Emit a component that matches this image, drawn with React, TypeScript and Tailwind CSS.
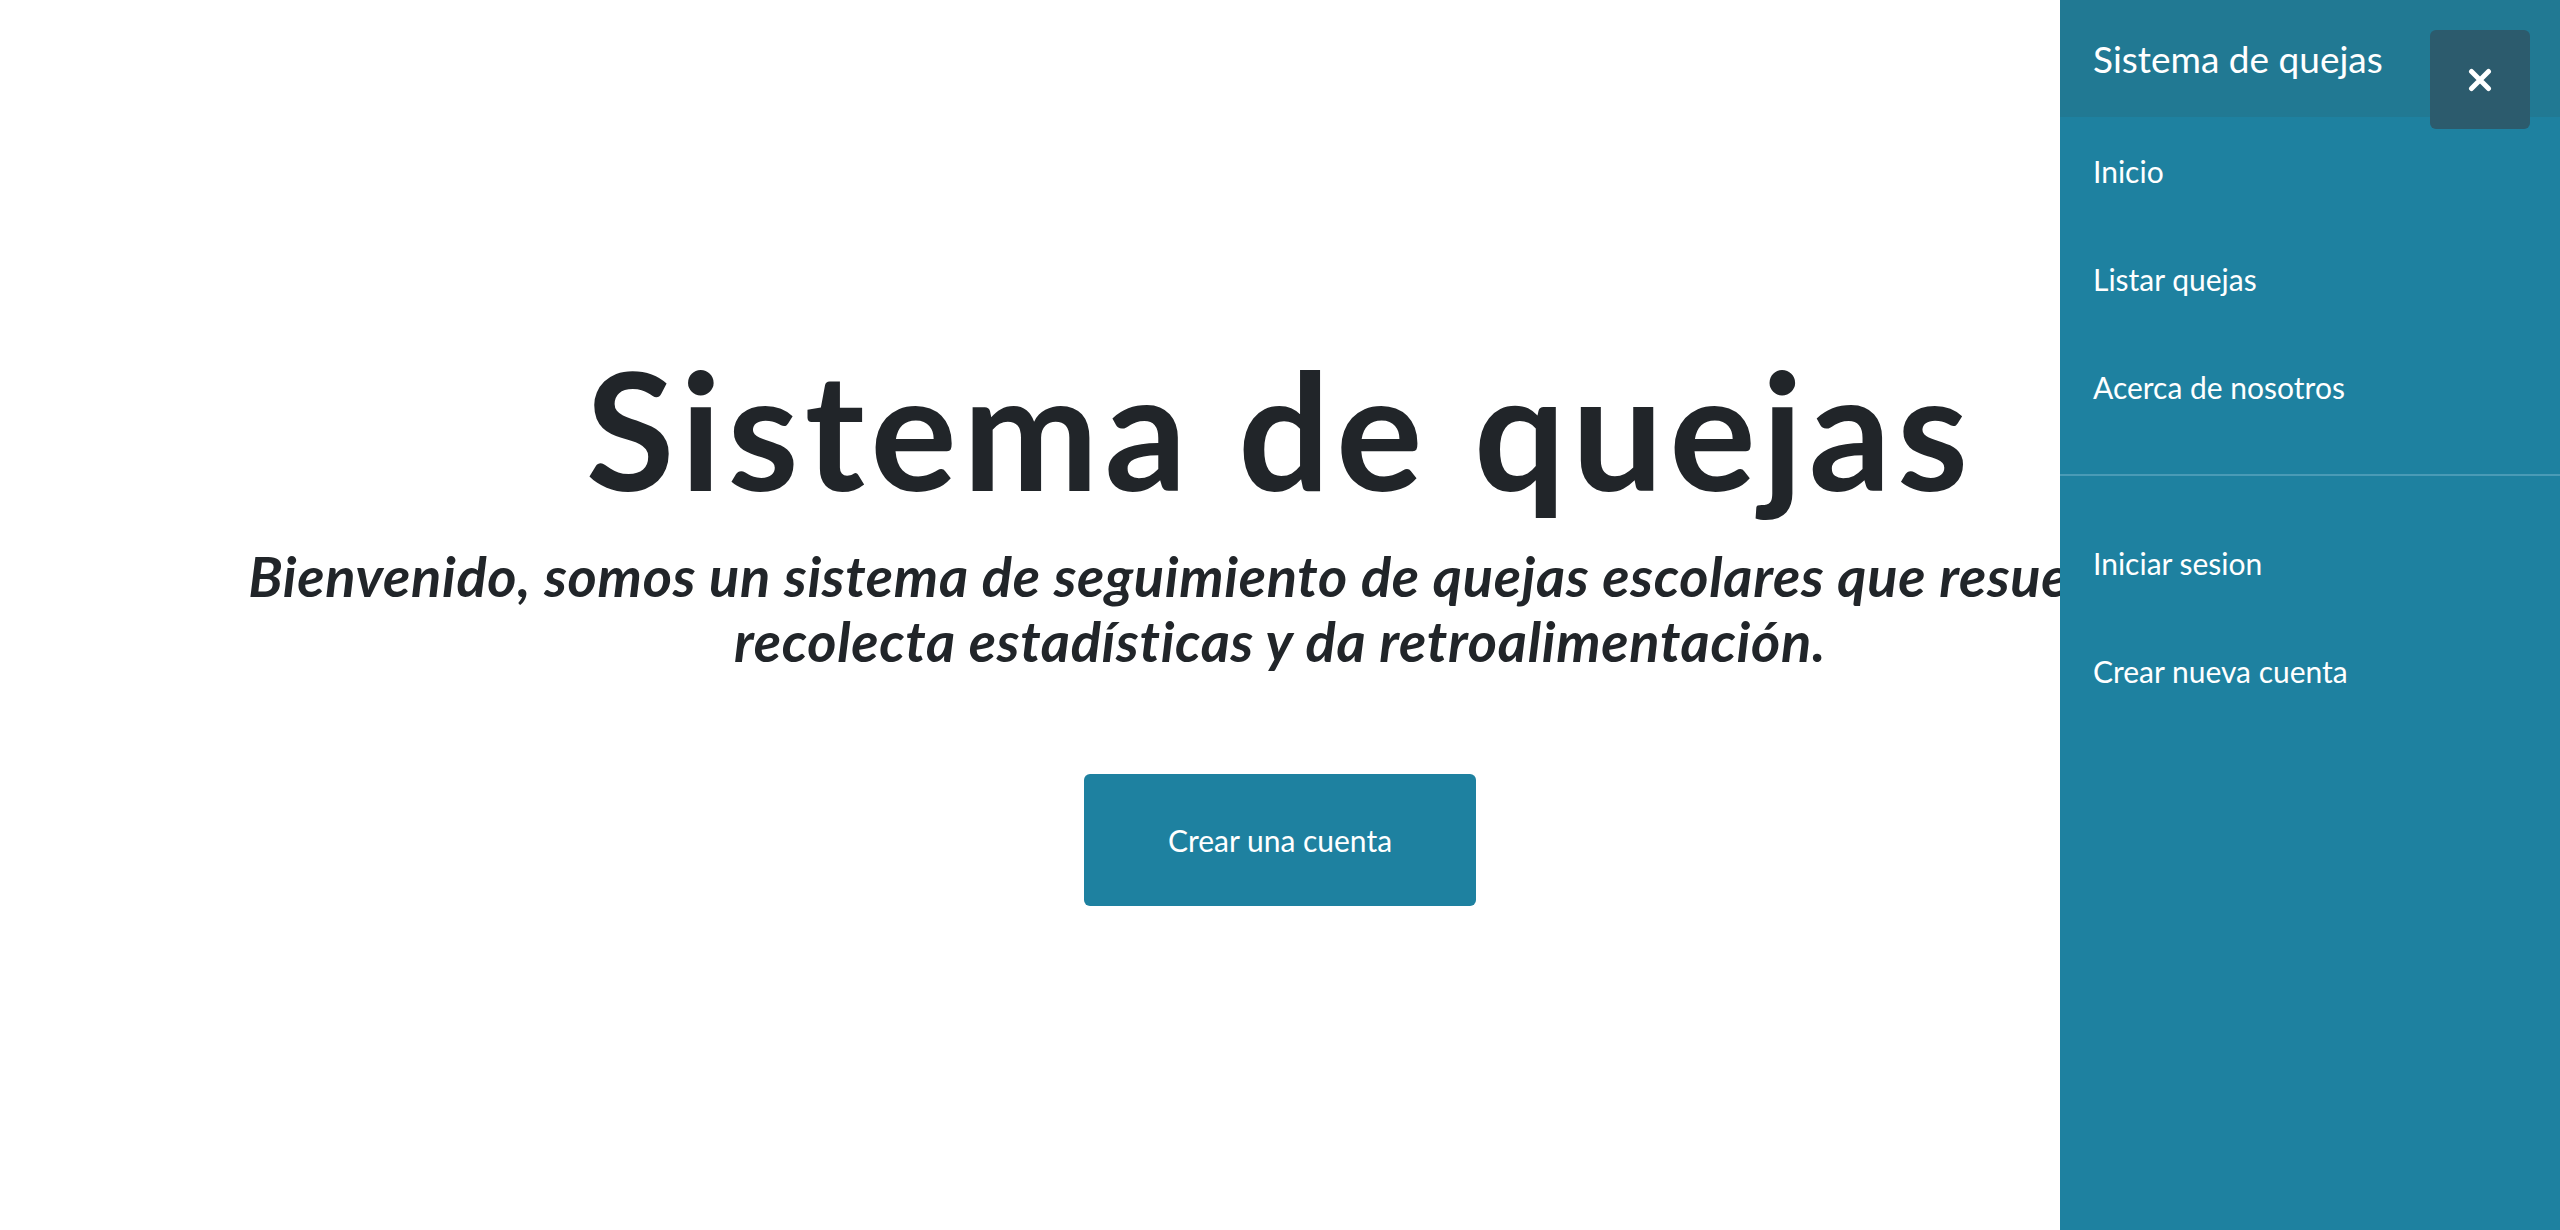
import React from "react";

const navTop = ["Inicio", "Listar quejas", "Acerca de nosotros"];
const navBottom = ["Iniciar sesion", "Crear nueva cuenta"];

function CloseIcon() {
  return (
    <svg width="24" height="24" viewBox="0 0 24 24" fill="none">
      <path d="M3.5 3.5L20.5 20.5M20.5 3.5L3.5 20.5" stroke="white" strokeWidth="5" strokeLinecap="round" />
    </svg>
  );
}

function Sidebar() {
  return (
    <aside className="fixed top-0 right-0 z-10 flex h-full w-[500px] flex-col bg-[#1e81a0] text-white">
      <div className="relative flex h-[117px] items-center bg-[#217993] px-[33px]">
        <span className="text-[37px]">Sistema de quejas</span>
        <button className="absolute top-[30px] right-[30px] flex h-[99px] w-[100px] items-center justify-center rounded-md bg-[#2c5b6d]">
          <CloseIcon />
        </button>
      </div>
      <nav className="flex flex-col">
        {navTop.map((item) => (
          <a key={item} href="#" className="flex h-[108px] items-center px-[33px] text-[30px]">
            {item}
          </a>
        ))}
      </nav>
      <hr className="my-[33px] border-t-2 border-[#4a9bb6]" />
      <nav className="flex flex-col">
        {navBottom.map((item) => (
          <a key={item} href="#" className="flex h-[108px] items-center px-[33px] text-[30px]">
            {item}
          </a>
        ))}
      </nav>
    </aside>
  );
}

export default function App() {
  return (
    <div className="relative min-h-[1230px] overflow-hidden bg-white font-['Lato',sans-serif]">
      <main className="flex flex-col items-center pt-[332px] text-center text-[#212529]">
        <h1 className="text-[162px] leading-[1.2] font-bold tracking-[6px] whitespace-nowrap">Sistema de quejas</h1>
        <p className="mt-[17px] max-w-[2120px] text-[56px] leading-[65px] font-bold tracking-[0.7px] italic">
          Bienvenido, somos un sistema de seguimiento de quejas escolares que resuelve dudas,
          recolecta estadísticas y da retroalimentación.
        </p>
        <a
          href="#"
          className="mt-[101px] flex h-[132px] w-[392px] items-center justify-center rounded-md bg-[#1e81a0] text-[30px] text-white"
        >
          Crear una cuenta
        </a>
      </main>
      <Sidebar />
    </div>
  );
}
